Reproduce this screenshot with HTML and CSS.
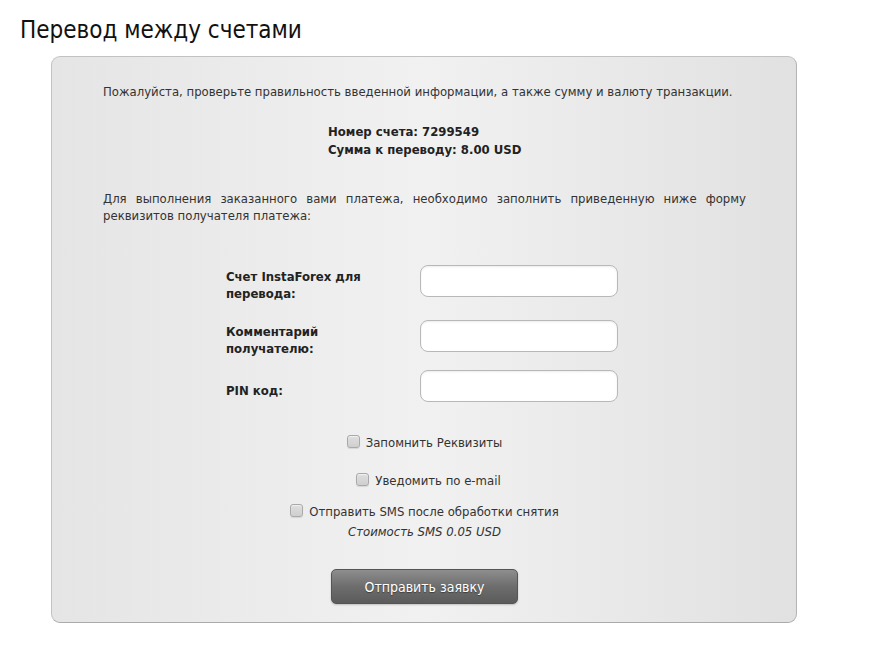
FILE: index.html
```html
<!DOCTYPE html>
<html lang="ru">
<head>
<meta charset="utf-8">
<title>Перевод между счетами</title>
<link rel="stylesheet" href="styles.css">
</head>
<body>
<h1 class="title">Перевод между счетами</h1>
<div class="panel">
  <p class="intro">Пожалуйста, проверьте правильность введенной информации, а также сумму и валюту транзакции.</p>
  <div class="summary">
    <div>Номер счета: 7299549</div>
    <div>Сумма к переводу: 8.00 USD</div>
  </div>
  <p class="note">Для выполнения заказанного вами платежа, необходимо заполнить приведенную ниже форму реквизитов получателя платежа:</p>
  <form class="form">
    <div class="row">
      <label class="label" for="acc">Счет InstaForex для перевода:</label>
      <input class="field" id="acc" type="text">
    </div>
    <div class="row">
      <label class="label" for="cmt">Комментарий получателю:</label>
      <input class="field" id="cmt" type="text">
    </div>
    <div class="row">
      <label class="label" for="pin">PIN код:</label>
      <input class="field" id="pin" type="text">
    </div>
    <div class="checks">
      <label class="check check-1"><input type="checkbox" class="box"> Запомнить Реквизиты</label>
      <label class="check check-2"><input type="checkbox" class="box"> Уведомить по e-mail</label>
      <label class="check check-3"><input type="checkbox" class="box"> Отправить SMS после обработки снятия</label>
      <div class="cost">Стоимость SMS 0.05 USD</div>
    </div>
    <div class="actions">
      <button type="button" class="submit">Отправить заявку</button>
    </div>
  </form>
</div>
</body>
</html>
```

FILE: styles.css
```css
html, body {
  margin: 0;
  padding: 0;
  background: #fff;
}
body {
  font-family: "DejaVu Sans Condensed", "DejaVu Sans", sans-serif;
  color: #333;
  font-size: 13px;
  padding: 14px 0 20px 0;
}
.title {
  margin: 0 0 10px 20px;
  font-size: 24px;
  font-weight: normal;
  line-height: 32px;
  color: #111;
}
.panel {
  margin-left: 51px;
  width: 643px;
  padding: 26px 50px 18px 51px;
  border: 1px solid #c2c2c2;
  border-bottom-color: #aaa;
  border-right-color: #b4b4b4;
  border-radius: 9px;
  background: linear-gradient(to right, #e5e5e5 0%, #f1f1f1 50%, #e1e1e1 100%);
}
.intro {
  margin: 0;
  line-height: 17px;
}
.summary {
  margin: 23px 0 0 225px;
  font-weight: bold;
  line-height: 18px;
  color: #222;
}
.note {
  margin: 31px 0 0 0;
  line-height: 17px;
  text-align: justify;
}
.form {
  margin: 36px 0 0 0;
}
.row {
  display: flex;
  align-items: center;
  margin-left: 123px;
  margin-bottom: 13px;
}
.label {
  box-sizing: border-box;
  width: 194px;
  padding: 8px 40px 0 0;
  font-weight: bold;
  line-height: 17px;
  color: #222;
}
.field {
  box-sizing: border-box;
  width: 198px;
  height: 32px;
  border: 1px solid #b8b8b8;
  border-radius: 8px;
  background: #fff;
  box-shadow: inset 0 1px 2px rgba(0,0,0,0.08);
  margin: 0;
}
.checks {
  display: flex;
  flex-direction: column;
  align-items: center;
  margin-top: 31px;
}
.check {
  display: flex;
  align-items: center;
  line-height: 20px;
  color: #333;
}
.check-1 { margin-left: 0; }
.check-2 { margin-top: 18px; margin-left: 8px; }
.check-3 { margin-top: 11px; }
.box {
  appearance: none;
  -webkit-appearance: none;
  box-sizing: border-box;
  width: 13px;
  height: 13px;
  margin: 0 6px 0 0;
  border: 1px solid #a9a9a9;
  border-radius: 3px;
  background: linear-gradient(to bottom, #dedede, #cfcfcf);
  box-shadow: inset 0 1px 1px rgba(255,255,255,0.6), 0 1px 1px rgba(0,0,0,0.1);
  position: relative;
  top: -2px;
}
.cost {
  font-style: italic;
  line-height: 20px;
  color: #333;
}
.actions {
  display: flex;
  justify-content: center;
  margin-top: 27px;
}
.submit {
  width: 187px;
  height: 35px;
  border: 1px solid #555;
  border-radius: 5px;
  background: linear-gradient(to bottom, #8e8e8e 0%, #6d6d6d 50%, #5b5b5b 100%);
  color: #fff;
  font-family: "DejaVu Sans Condensed", "DejaVu Sans", sans-serif;
  font-size: 14px;
  text-shadow: 0 1px 1px rgba(0,0,0,0.4);
  box-shadow: 0 1px 2px rgba(0,0,0,0.2);
  cursor: pointer;
}
```
